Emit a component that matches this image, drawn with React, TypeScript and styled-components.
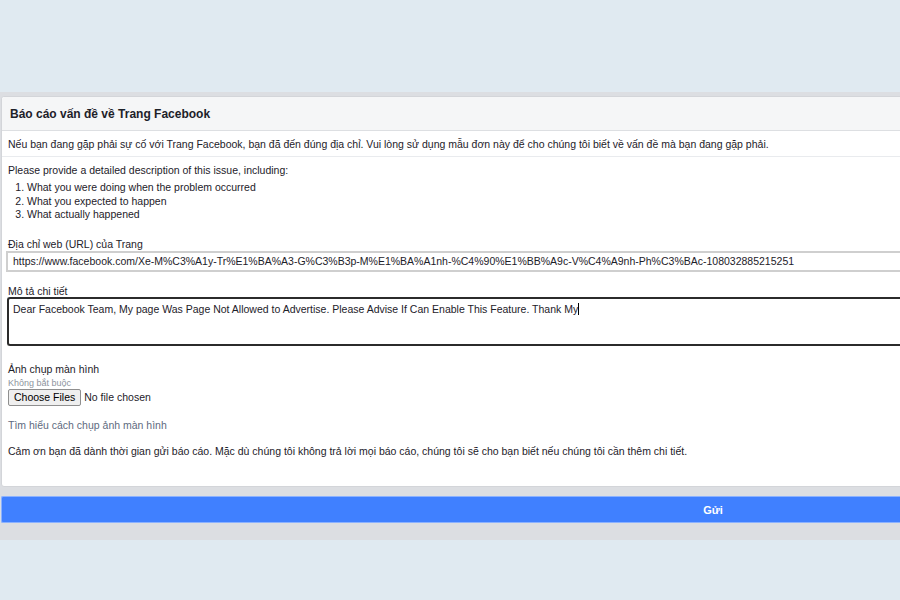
import React from "react";
import styled, { createGlobalStyle } from "styled-components";

const Global = createGlobalStyle`
  html, body { margin: 0; padding: 0; overflow: hidden; background: #e0eaf1; }
  body { font-family: "Liberation Sans", Arial, sans-serif; }
`;

const Page = styled.div`
  width: 1424px;
  height: 600px;
  display: flex;
  flex-direction: column;
  background: #e0eaf1;
`;

const TopSpace = styled.div`
  height: 92px;
  flex: none;
`;

const Band = styled.div`
  background: #dcdee2;
  padding: 4px 0 17px 1px;
  display: flex;
  flex-direction: column;
  gap: 9px;
`;

const Card = styled.div`
  background: #fff;
  border: 1px solid #d3d5d9;
  border-radius: 3px;
  height: 391px;
  box-sizing: border-box;
  display: flex;
  flex-direction: column;
  color: #1d2129;
  font-size: 10.5px;
`;

const Header = styled.div`
  height: 34px;
  box-sizing: border-box;
  background: #f5f6f7;
  border-bottom: 1px solid #dddfe2;
  border-radius: 3px 3px 0 0;
  display: flex;
  align-items: center;
  padding-left: 8px;
  font-weight: bold;
  font-size: 12px;
  color: #1d2129;
`;

const Intro = styled.div`
  height: 26px;
  box-sizing: border-box;
  border-bottom: 1px solid #e9ebee;
  display: flex;
  align-items: center;
  padding-left: 6px;
  color: #1d2129;
`;

const Body = styled.div`
  padding: 6px 6px 0 6px;
  display: flex;
  flex-direction: column;
`;

const Para = styled.div<{ $mt?: number }>`
  margin-top: ${(p) => p.$mt ?? 0}px;
  line-height: 14px;
`;

const Steps = styled.ol`
  margin: 4px 0 0 0;
  padding-left: 19px;
  line-height: 13.6px;
`;

const Label = styled.div<{ $mt: number }>`
  margin-top: ${(p) => p.$mt}px;
  line-height: 14px;
`;

const UrlInput = styled.div`
  margin: 0 0 0 -2px;
  height: 21px;
  box-sizing: border-box;
  border-top: 2px solid #cfcfcf;
  border-bottom: 2px solid #cfcfcf;
  border-left: 2px solid #cfcfcf;
  display: flex;
  align-items: center;
  padding-left: 5px;
  white-space: nowrap;
  color: #1d2129;
`;

const TextArea = styled.div`
  margin: -1px 0 0 -1px;
  height: 49px;
  box-sizing: border-box;
  border: 2px solid #2b2b2b;
  border-right: none;
  border-radius: 3px 0 0 3px;
  padding: 3px 0 0 4px;
  line-height: 14px;
  white-space: nowrap;
`;

const Caret = styled.span`
  display: inline-block;
  width: 1px;
  height: 12px;
  background: #000;
  vertical-align: -2px;
`;

const Optional = styled.div`
  font-size: 9px;
  color: #8d949e;
  line-height: 12px;
  margin-top: 1px;
`;

const FileRow = styled.div`
  display: flex;
  align-items: center;
  gap: 3px;
`;

const FileButton = styled.div`
  height: 17px;
  box-sizing: border-box;
  border: 1px solid #8f8f8f;
  border-radius: 2px;
  background: #efefef;
  padding: 0 5px;
  display: flex;
  align-items: center;
  color: #000;
  font-size: 10.5px;
`;

const HelpLink = styled.div`
  margin-top: 12px;
  color: #5e6a80;
  line-height: 14px;
`;

const Submit = styled.div`
  height: 27px;
  box-sizing: border-box;
  background: #4080ff;
  border-top: 1px solid #8cb2ff;
  border-bottom: 1px solid #8cb2ff;
  border-left: 1px solid #8cb2ff;
  border-radius: 2px 0 0 2px;
  display: flex;
  align-items: center;
  justify-content: center;
  color: #fff;
  font-size: 11px;
  font-weight: bold;
`;

const Bottom = styled.div`
  flex: 1;
`;

export default function App() {
  return (
    <Page>
      <Global />
      <TopSpace />
      <Band>
        <Card>
          <Header>Báo cáo vấn đề về Trang Facebook</Header>
          <Intro>
            Nếu bạn đang gặp phải sự cố với Trang Facebook, bạn đã đến đúng địa chỉ. Vui lòng sử dụng mẫu đơn này để cho chúng tôi biết về vấn đề mà bạn đang gặp phải.
          </Intro>
          <Body>
            <Para>Please provide a detailed description of this issue, including:</Para>
            <Steps>
              <li>What you were doing when the problem occurred</li>
              <li>What you expected to happen</li>
              <li>What actually happened</li>
            </Steps>
            <Label $mt={15}>Địa chỉ web (URL) của Trang</Label>
            <UrlInput>
              https://www.facebook.com/Xe-M%C3%A1y-Tr%E1%BA%A3-G%C3%B3p-M%E1%BA%A1nh-%C4%90%E1%BB%A9c-V%C4%A9nh-Ph%C3%BAc-108032885215251
            </UrlInput>
            <Label $mt={12}>Mô tả chi tiết</Label>
            <TextArea>
              Dear Facebook Team, My page Was Page Not Allowed to Advertise. Please Advise If Can Enable This Feature. Thank My
              <Caret />
            </TextArea>
            <Label $mt={16}>Ảnh chụp màn hình</Label>
            <Optional>Không bắt buộc</Optional>
            <FileRow>
              <FileButton>Choose Files</FileButton>
              <span>No file chosen</span>
            </FileRow>
            <HelpLink>Tìm hiểu cách chụp ảnh màn hình</HelpLink>
            <Para $mt={12}>
              Cảm ơn bạn đã dành thời gian gửi báo cáo. Mặc dù chúng tôi không trả lời mọi báo cáo, chúng tôi sẽ cho bạn biết nếu chúng tôi cần thêm chi tiết.
            </Para>
          </Body>
        </Card>
        <Submit>Gửi</Submit>
      </Band>
      <Bottom />
    </Page>
  );
}
